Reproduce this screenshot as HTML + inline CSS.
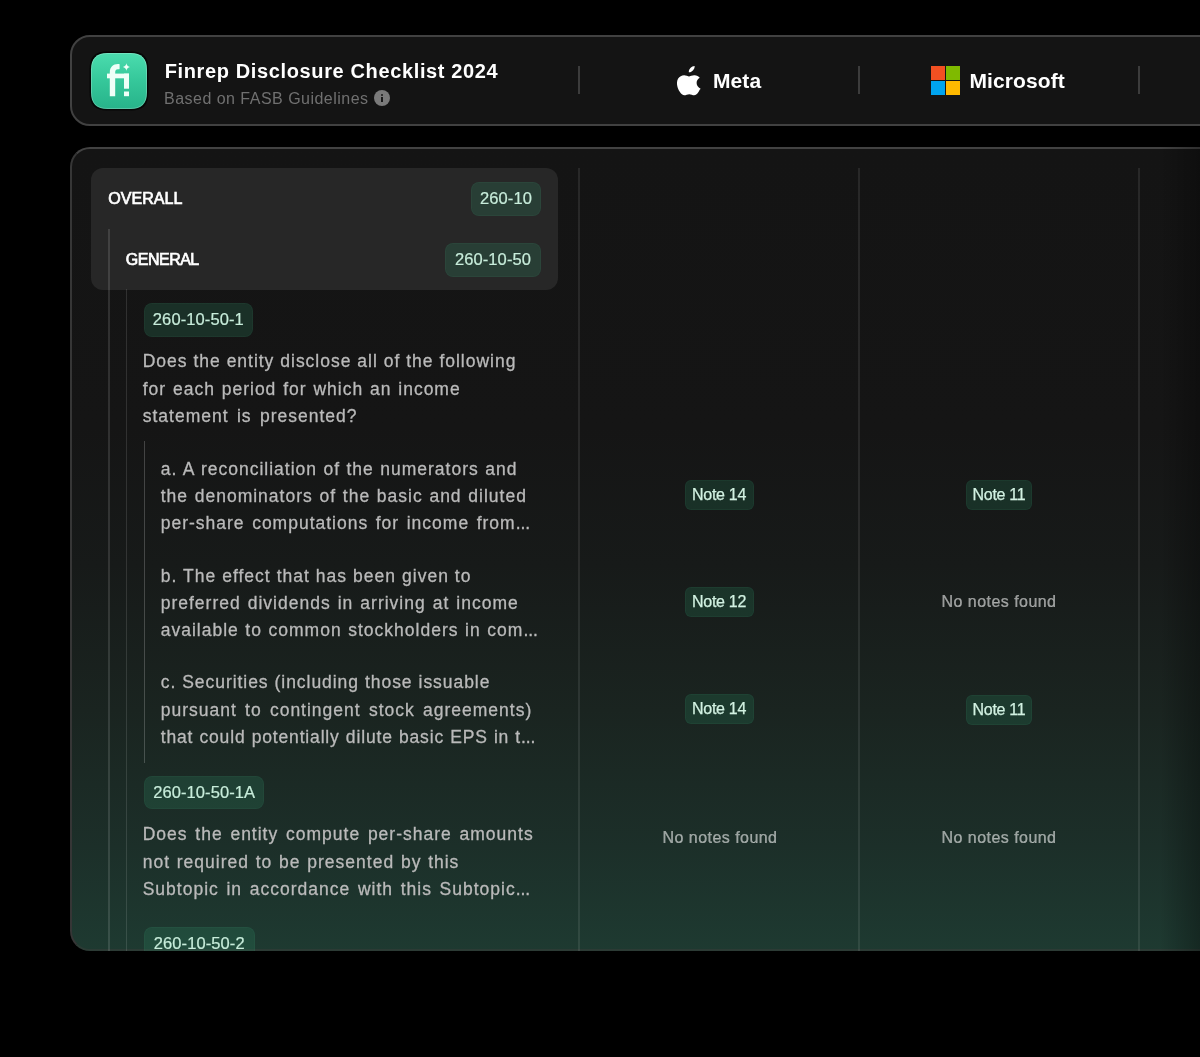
<!DOCTYPE html>
<html>
<head>
<meta charset="utf-8">
<style>
html,body{margin:0;padding:0;}
body{width:1200px;height:1057px;background:#000;overflow:hidden;position:relative;font-family:"Liberation Sans",sans-serif;}
.abs{position:absolute;white-space:nowrap;}
.hdr{position:absolute;left:70px;top:35px;width:1180px;height:87px;border:2px solid #414141;border-radius:20px;background:#141414;}
.card{position:absolute;left:70px;top:147px;width:1180px;height:800px;border:2px solid #363636;border-top-color:#424242;border-bottom-color:#2c3b35;border-radius:20px;background:linear-gradient(180deg,#141414 0%,#151515 35%,#171a19 52%,#1a2420 70%,#1c2f29 87%,#1e3a31 100%);background-origin:border-box;overflow:hidden;}
.sep{position:absolute;width:1.5px;background:#3c3c3c;}
.title{left:164.7px;top:61px;font-size:20px;font-weight:700;color:#fff;letter-spacing:0.63px;line-height:20px;}
.sub{left:164px;top:89px;font-size:16px;color:#707070;letter-spacing:0.48px;line-height:20px;}
.tag{position:absolute;height:33.5px;line-height:33.5px;border-radius:8px;background:rgba(44,140,100,0.24);box-shadow:inset 0 0 0 1px rgba(90,200,150,0.05);color:#c8eddb;-webkit-text-stroke:0.2px #c8eddb;font-size:16.5px;letter-spacing:0.1px;text-align:center;white-space:nowrap;}
.note{position:absolute;height:30px;line-height:30px;border-radius:6px;background:rgba(40,150,105,0.2);box-shadow:inset 0 0 0 1px rgba(90,200,150,0.06);color:#d2f2e2;-webkit-text-stroke:0.25px #d2f2e2;font-size:16px;letter-spacing:-0.3px;text-align:center;white-space:nowrap;}
.none{position:absolute;color:rgba(255,255,255,0.56);-webkit-text-stroke:0.2px rgba(255,255,255,0.56);font-size:16px;letter-spacing:0.46px;line-height:20px;white-space:nowrap;text-align:center;width:200px;}
.para{position:absolute;color:#bababa;font-size:17.5px;line-height:27.1px;letter-spacing:1.0px;white-space:nowrap;-webkit-text-stroke:0.3px #bababa;}
.j{text-align:justify;text-align-last:justify;}
.vl{position:absolute;width:1.5px;background:rgba(255,255,255,0.12);}
</style>
</head>
<body>
<div id="wrap" style="position:absolute;left:0;top:0;width:1200px;height:1057px;will-change:transform;">
<!-- header -->
<div class="hdr"></div>
<!-- logo -->
<svg class="abs" style="left:89px;top:50.5px" width="60" height="60" viewBox="0 0 60 60">
  <defs>
    <linearGradient id="lg" x1="0" y1="0" x2="0" y2="1">
      <stop offset="0" stop-color="#4bdcae"/>
      <stop offset="0.5" stop-color="#35c79a"/>
      <stop offset="1" stop-color="#27b38a"/>
    </linearGradient>
  </defs>
  <path d="M18 0.6 H42 C54 0.6 59.4 6 59.4 18 V42 C59.4 54 54 59.4 42 59.4 H18 C6 59.4 0.6 54 0.6 42 V18 C0.6 6 6 0.6 18 0.6 Z" fill="#060606"/>
  <path d="M18.5 2 H41.5 C52.5 2 58 7.5 58 18.5 V41.5 C58 52.5 52.5 58 41.5 58 H18.5 C7.5 58 2 52.5 2 41.5 V18.5 C2 7.5 7.5 2 18.5 2 Z" fill="url(#lg)"/>
  <path d="M18.5 2.5 H41.5 C52.2 2.5 57.5 7.8 57.5 18.5 V41.5 C57.5 52.2 52.2 57.5 41.5 57.5 H18.5 C7.8 57.5 2.5 52.2 2.5 41.5 V18.5 C2.5 7.8 7.8 2.5 18.5 2.5 Z" fill="none" stroke="rgba(255,255,255,0.22)" stroke-width="1"/>
  <path d="M20.8 45.2 V21.5 C20.8 16 24 13 29 13 H30.2 Q30.6 13 30.6 13.6 V17.6 Q30.6 18.2 30.2 18.2 H29 C26.6 18.2 26.2 19.6 26.2 21.5 V45.2 Z" fill="#effff8"/>
  <rect x="18" y="22.6" width="22" height="4.7" fill="#effff8"/>
  <rect x="35" y="22.6" width="5" height="15.1" fill="#effff8"/>
  <rect x="35" y="40.5" width="5" height="4.7" fill="#effff8"/>
  <path d="M37.4 12.2 Q38 15.4 41 16 Q38 16.6 37.4 19.8 Q36.8 16.6 33.8 16 Q36.8 15.4 37.4 12.2 Z" fill="#effff8"/>
</svg>
<div class="abs title">Finrep Disclosure Checklist 2024</div>
<div class="abs sub">Based on FASB Guidelines</div>
<div class="abs" style="left:374.2px;top:90.1px;width:16px;height:16px;border-radius:50%;background:#7a7a7a;"></div>
<div class="abs" style="left:381.2px;top:94px;width:2px;height:2px;background:#1a1a1a;border-radius:1px;"></div>
<div class="abs" style="left:381.2px;top:96.8px;width:2px;height:5.4px;background:#1a1a1a;"></div>

<div class="sep" style="left:578.2px;top:66px;height:28px;"></div>
<div class="sep" style="left:858.2px;top:66px;height:28px;"></div>
<div class="sep" style="left:1138.2px;top:66px;height:28px;"></div>

<!-- apple -->
<svg class="abs" style="left:676.5px;top:66px" width="26" height="30" viewBox="0 0 170 205" preserveAspectRatio="none">
  <path fill="#fff" d="M150.4 159.6c-2.8 6.4-6.1 12.3-9.9 17.8-5.2 7.4-9.5 12.6-12.7 15.4-5.1 4.7-10.5 7.1-16.3 7.2-4.2 0-9.2-1.2-15.1-3.6-5.9-2.4-11.3-3.6-16.3-3.6-5.2 0-10.8 1.2-16.8 3.6-6 2.4-10.8 3.7-14.5 3.8-5.6.2-11.1-2.2-16.6-7.4-3.5-3.1-7.9-8.3-13.1-15.8-5.6-7.9-10.2-17-13.8-27.4C1.6 139.3-.3 128.3-.3 117.7c0-12.2 2.6-22.7 7.9-31.5 4.2-7.1 9.7-12.8 16.7-16.9 7-4.2 14.5-6.3 22.6-6.4 4.4 0 10.2 1.4 17.4 4.1 7.2 2.7 11.8 4.1 13.8 4.1 1.5 0 6.6-1.6 15.3-4.8 8.2-3 15.1-4.2 20.8-3.7 15.4 1.2 27 7.3 34.6 18.2-13.8 8.4-20.6 20.1-20.4 35.1.1 11.7 4.4 21.4 12.6 29.1 3.7 3.5 7.9 6.2 12.5 8.2-1 2.9-2.1 5.7-3.2 8.4zM115.3 3.7c0 9.1-3.3 17.6-9.9 25.5-8 9.3-17.6 14.7-28.1 13.9-.1-1.1-.2-2.3-.2-3.5 0-8.7 3.8-18.1 10.6-25.7 3.4-3.9 7.7-7.1 12.9-9.7C105.8 1.7 110.7.3 115.3 0c.1 1.2.1 2.5.1 3.7z"/>
</svg>
<div class="abs" style="left:713px;top:70.5px;font-size:21px;font-weight:700;color:#fff;letter-spacing:0.1px;line-height:20px;">Meta</div>

<!-- microsoft -->
<div class="abs" style="left:931.3px;top:66.2px;width:13.5px;height:13.5px;background:#f25022;"></div>
<div class="abs" style="left:946.2px;top:66.2px;width:13.5px;height:13.5px;background:#7fba00;"></div>
<div class="abs" style="left:931.3px;top:81.1px;width:13.5px;height:13.5px;background:#00a4ef;"></div>
<div class="abs" style="left:946.2px;top:81.1px;width:13.5px;height:13.5px;background:#ffb900;"></div>
<div class="abs" style="left:969.5px;top:70.5px;font-size:21px;font-weight:700;color:#fff;letter-spacing:0.1px;line-height:20px;">Microsoft</div>

<!-- main card -->
<div class="card"></div>
<div class="sep" style="left:578.2px;top:168px;height:783px;background:rgba(255,255,255,0.085);"></div>
<div class="sep" style="left:858.2px;top:168px;height:783px;background:rgba(255,255,255,0.085);"></div>
<div class="sep" style="left:1138.2px;top:168px;height:783px;background:rgba(255,255,255,0.085);"></div>

<div class="abs" style="left:91px;top:168px;width:467px;height:121.5px;border-radius:12px;background:#272727;"></div>
<div class="abs" style="left:108.3px;top:189px;font-size:16px;font-weight:400;color:#fff;-webkit-text-stroke:0.7px #fff;letter-spacing:0.05px;line-height:20px;">OVERALL</div>
<div class="tag" style="left:470.7px;top:182px;width:70.6px;">260-10</div>
<div class="vl" style="left:108px;top:229px;height:722px;"></div>
<div class="abs" style="left:125.8px;top:250px;font-size:16px;font-weight:400;color:#fff;-webkit-text-stroke:0.7px #fff;letter-spacing:-0.5px;line-height:20px;">GENERAL</div>
<div class="tag" style="left:444.7px;top:243.3px;width:96.6px;">260-10-50</div>
<div class="vl" style="left:125.7px;top:289px;height:662px;"></div>

<div class="tag" style="left:144px;top:303.2px;width:108.7px;">260-10-50-1</div>
<div class="vl" style="left:143.5px;top:441px;height:322px;background:rgba(255,255,255,0.2);"></div>

<div class="tag" style="left:144.2px;top:775.8px;width:120px;">260-10-50-1A</div>
<div class="tag" style="left:143.5px;top:926.8px;width:111.5px;">260-10-50-2</div>

<div class="para j" style="left:142.7px;top:348.4px;width:373.7px;letter-spacing:0.98px;">Does the entity disclose all of the following</div>
<div class="para j" style="left:142.7px;top:375.5px;width:318.0px;">for each period for which an income</div>
<div class="para j" style="left:142.7px;top:402.6px;width:214.8px;">statement is presented?</div>
<div class="para j" style="left:160.7px;top:455.6px;width:356.7px;">a. A reconciliation of the numerators and</div>
<div class="para j" style="left:160.7px;top:482.7px;width:366.2px;">the denominators of the basic and diluted</div>
<div class="para j" style="left:160.7px;top:509.8px;width:369.3px;">per-share computations for income from<span style="letter-spacing:-0.1px">...</span></div>
<div class="para j" style="left:160.7px;top:563.2px;width:310.8px;">b. The effect that has been given to</div>
<div class="para j" style="left:160.7px;top:590.3px;width:358.1px;">preferred dividends in arriving at income</div>
<div class="para j" style="left:160.7px;top:617.4px;width:377.0px;">available to common stockholders in com<span style="letter-spacing:-0.1px">...</span></div>
<div class="para j" style="left:160.7px;top:669.4px;width:329.7px;letter-spacing:0.95px;">c. Securities (including those issuable</div>
<div class="para j" style="left:160.7px;top:696.5px;width:371.6px;">pursuant to contingent stock agreements)</div>
<div class="para j" style="left:160.7px;top:723.6px;width:374.7px;letter-spacing:0.84px;">that could potentially dilute basic EPS in t<span style="letter-spacing:-0.1px">...</span></div>
<div class="para j" style="left:142.7px;top:821.4px;width:391.0px;">Does the entity compute per-share amounts</div>
<div class="para j" style="left:142.7px;top:848.5px;width:316.7px;">not required to be presented by this</div>
<div class="para j" style="left:142.7px;top:875.6px;width:387.3px;">Subtopic in accordance with this Subtopic<span style="letter-spacing:-0.1px">...</span></div>
<!-- notes -->
<div class="note" style="left:684.6px;top:480.4px;width:69px;">Note 14</div>
<div class="note" style="left:966px;top:480.4px;width:66px;">Note 11</div>
<div class="note" style="left:684.6px;top:587.4px;width:69px;">Note 12</div>
<div class="none" style="left:899px;top:592px;">No notes found</div>
<div class="note" style="left:684.6px;top:694.4px;width:69px;">Note 14</div>
<div class="note" style="left:966px;top:694.8px;width:66px;">Note 11</div>
<div class="none" style="left:620px;top:828px;">No notes found</div>
<div class="none" style="left:899px;top:828px;">No notes found</div>

<div class="abs" style="left:1160px;top:147px;width:40px;height:804px;background:linear-gradient(90deg,rgba(0,0,0,0) 0%,rgba(0,0,0,0.3) 100%);"></div>
<!-- bottom black cover (clips tag) -->
<div class="abs" style="left:0;top:951px;width:1200px;height:106px;background:#000;"></div>
</div>
</body>
</html>
